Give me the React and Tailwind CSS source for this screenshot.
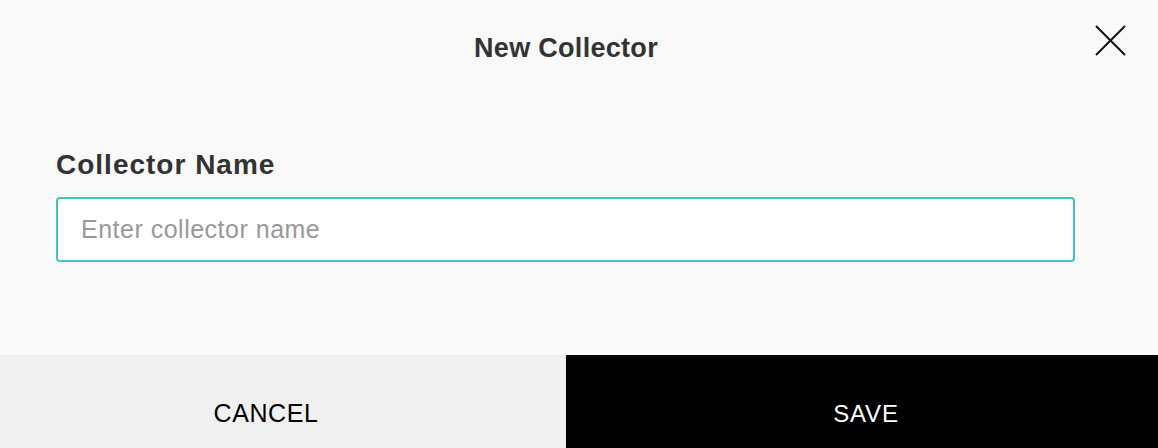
import React from "react";

export default function App() {
  return (
    <div className="w-[1158px] h-[448px] bg-[#f9f9f9] flex flex-col font-['Liberation_Sans',Arial,sans-serif] text-[#333]">
      <div className="relative h-[96px] flex items-center justify-center">
        <h1 className="text-[27px] font-bold tracking-[0.3px] text-[#333] mr-[26px] mt-[1px]">New Collector</h1>
        <button className="absolute right-[31px] top-[24px] w-[33px] h-[33px] flex items-center justify-center">
          <svg width="33" height="33" viewBox="0 0 33 33" fill="none" stroke="#111" strokeWidth="2">
            <path d="M2 2 L31 31 M31 2 L2 31" />
          </svg>
        </button>
      </div>
      <div className="flex-1 px-[56px] pt-[54px]">
        <label className="block text-[28px] font-bold tracking-[1px] text-[#333] leading-[30px] mb-[17px]">Collector Name</label>
        <input
          className="w-[1019px] h-[65px] bg-white border-2 border-[#40c4bf] rounded-[4px] pl-[23px] pr-[21px] text-[25px] tracking-[0.5px] text-[#333] placeholder:text-[#999] outline-none"
          placeholder="Enter collector name"
        />
      </div>
      <div className="h-[93px] flex">
        <button className="w-[566px] bg-[#f0f0f0] text-black text-[25px] tracking-[0.6px] pt-[24px] pr-[34px]">CANCEL</button>
        <button className="flex-1 bg-black text-white text-[24px] tracking-[0.8px] pt-[24px] pl-[8px]">SAVE</button>
      </div>
    </div>
  );
}
